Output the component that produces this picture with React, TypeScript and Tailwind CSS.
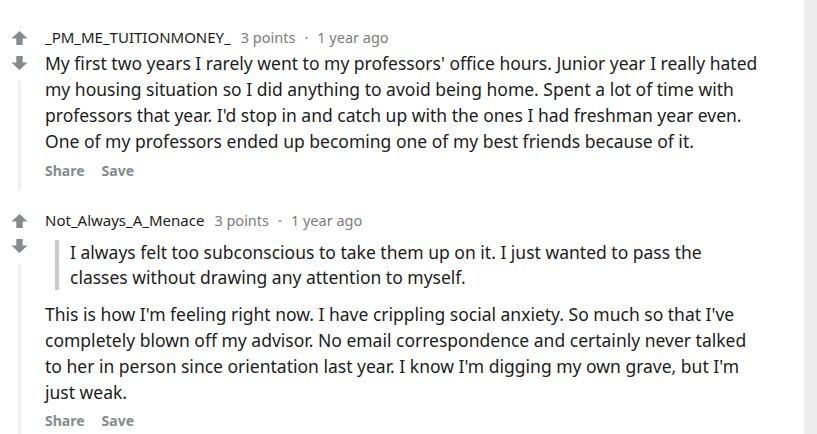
import React from 'react';

const font = { fontFamily: '"Noto Sans", "Open Sans", sans-serif' };

const Arrow: React.FC<{ down?: boolean }> = ({ down }) => (
  <svg width="17" height="16" viewBox="0 0 17 16" className={down ? 'rotate-180' : ''}>
    <path d="M8.5 1 L16.5 8.5 L11.7 8.5 L11.7 15 L5.3 15 L5.3 8.5 L0.5 8.5 Z" fill="#878a8c" />
  </svg>
);

type CommentProps = {
  author: string;
  quote?: string;
  body: string;
  threadClass: string;
  shareClass: string;
};

const Comment: React.FC<CommentProps> = ({ author, quote, body, threadClass, shareClass }) => (
  <div className="flex">
    <div className="w-[45px] shrink-0 flex flex-col items-center">
      <div className="pr-[6px] pt-[2px] flex flex-col items-center gap-[9px]">
        <Arrow />
        <Arrow down />
      </div>
      <div className={`w-[3px] mr-[6px] mt-[10px] bg-[#edeff1] ${threadClass}`} />
    </div>
    <div className="flex-1 pr-[45px]">
      <div className="flex items-center text-[14.5px] leading-[18px] h-[18px]">
        <span className="text-[#1c1c1c] text-[15px]">{author}</span>
        <span className="ml-[10px] text-[#7c7c7c]">3 points</span>
        <span className="mx-[9px] text-[#7c7c7c]">·</span>
        <span className="text-[#7c7c7c]">1 year ago</span>
      </div>
      {quote && (
        <div className="mt-[11px] border-l-4 border-[#c9c9c9] pl-[11px] ml-[10px] text-[17.5px] leading-[25px] text-[#1c1c1c]">
          {quote}
        </div>
      )}
      <p className={`text-[17.5px] leading-[26px] text-[#1c1c1c] ${quote ? 'mt-[11px]' : 'mt-[4px]'}`}>{body}</p>
      <div className={`flex gap-[17px] text-[14px] font-bold text-[#878a8c] leading-[24px] ${shareClass}`}>
        <span>Share</span>
        <span>Save</span>
      </div>
    </div>
  </div>
);

export default function App() {
  return (
    <div className="flex w-[817px] h-[434px] bg-white overflow-hidden" style={font}>
      <div className="flex-1 pt-[28px] flex flex-col gap-[21px]">
        <Comment
          author="_PM_ME_TUITIONMONEY_"
          body="My first two years I rarely went to my professors' office hours. Junior year I really hated my housing situation so I did anything to avoid being home. Spent a lot of time with professors that year. I'd stop in and catch up with the ones I had freshman year even. One of my professors ended up becoming one of my best friends because of it."
          threadClass="h-[109px]"
          shareClass="mt-[5px]"
        />
        <Comment
          author="Not_Always_A_Menace"
          quote="I always felt too subconscious to take them up on it. I just wanted to pass the classes without drawing any attention to myself."
          body="This is how I'm feeling right now. I have crippling social anxiety. So much so that I've completely blown off my advisor. No email correspondence and certainly never talked to her in person since orientation last year. I know I'm digging my own grave, but I'm just weak."
          threadClass="h-[200px]"
          shareClass="mt-[4px]"
        />
      </div>
      <div className="w-[13px] bg-[#ededed]" />
    </div>
  );
}
